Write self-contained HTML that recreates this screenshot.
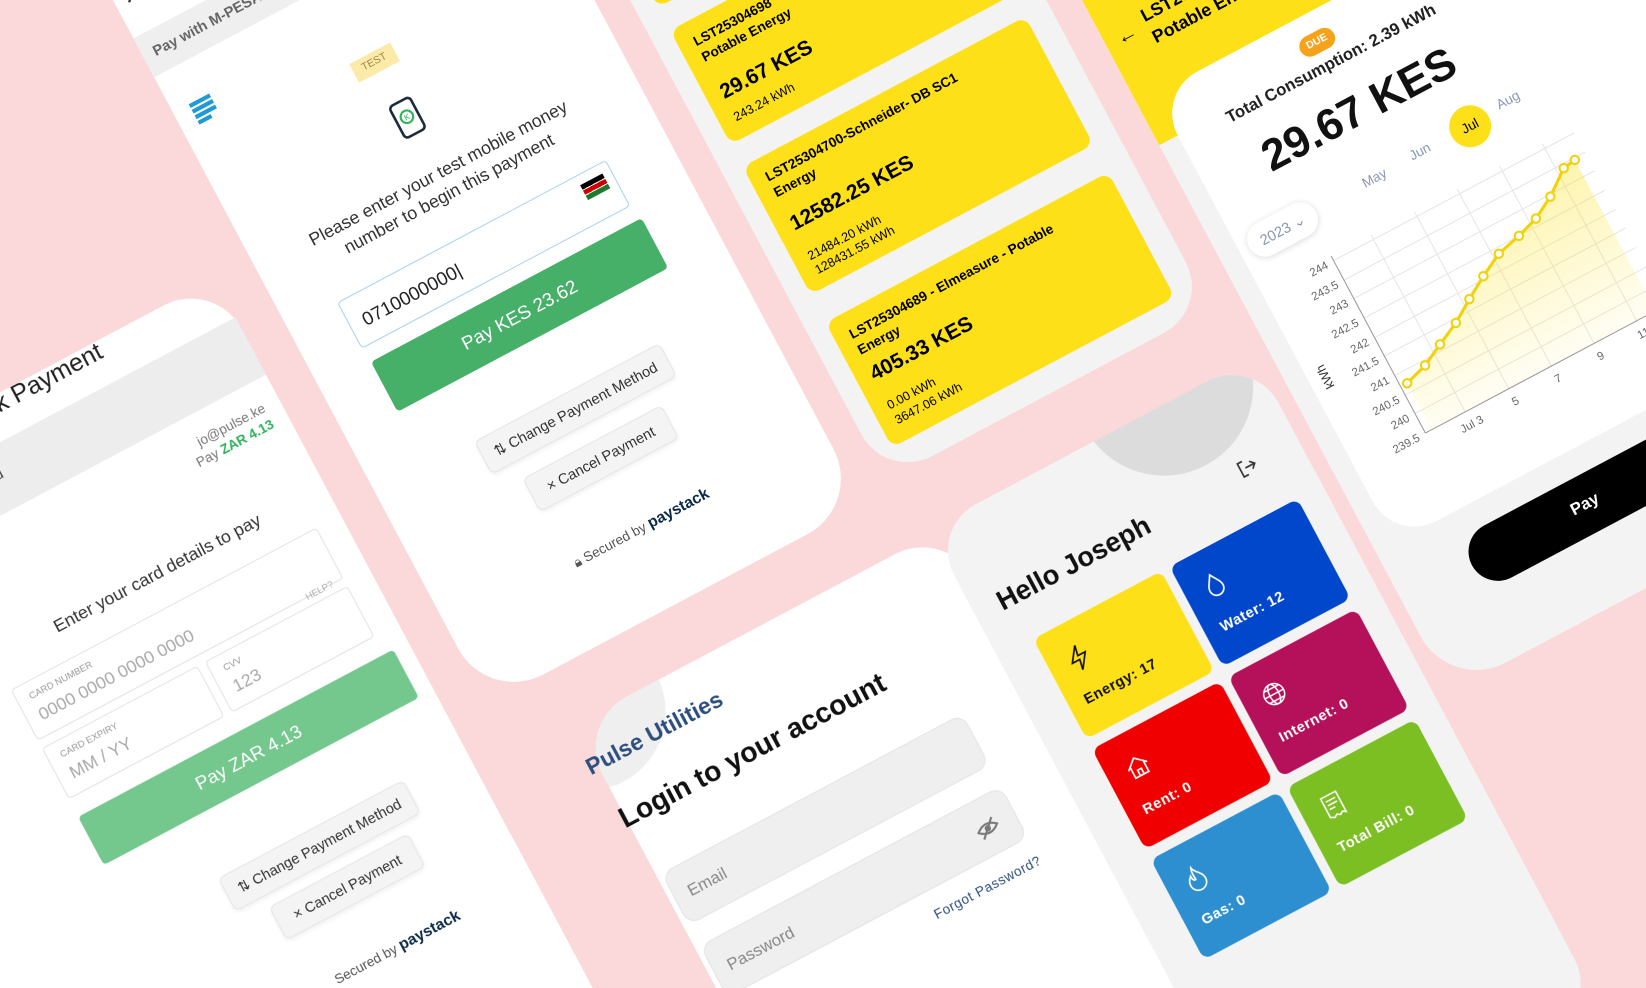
<!DOCTYPE html>
<html><head><meta charset="utf-8">
<style>
*{margin:0;padding:0;box-sizing:border-box}
html,body{width:1646px;height:988px;overflow:hidden}
body{background:#fbd9da;font-family:"Liberation Sans",sans-serif}
#clip{position:relative;width:1646px;height:988px;overflow:hidden;background:#fbd9da}
#wrap{position:absolute;left:0;top:0;width:1568px;height:941px;transform:scale(1.0497);transform-origin:0 0}
#plane{position:absolute;left:0;top:0;width:10px;height:10px;transform:matrix(0.883,-0.469,0.47,0.883,0,0);transform-origin:0 0}
.a{position:absolute;white-space:nowrap}
.ph{position:absolute;overflow:hidden}
.pill{position:absolute;background:#f4f4f4;border:1px solid #e6e6e6;border-radius:6px;font-size:14px;color:#333;display:flex;align-items:center;justify-content:center;box-shadow:0 2px 4px rgba(0,0,0,.06)}
.card{position:absolute;left:550px;width:305px;background:#fde018;border-radius:10px}
.tile{position:absolute;width:138px;height:108px;border-radius:8px;color:#fff}
.tile .l{position:absolute;left:16px;top:66px;font-size:14px;font-weight:700;letter-spacing:.5px}
.tile svg{position:absolute;left:18px;top:22px}
.box{position:absolute;border:1px solid #e3e3e3;border-radius:4px;background:#fff}
.lbl{position:absolute;left:12px;top:8px;font-size:9px;color:#999}
.val{position:absolute;left:12px;top:24px;font-size:17px;color:#aaa}
</style></head><body>
<div id="clip">
<div id="wrap"><div id="plane">

<!-- Phone A -->
<div class="ph" style="left:-500px;top:330px;width:556px;height:1200px;border-radius:55px;background:#fff"></div>
<div class="a" style="left:-300px;width:228px;text-align:right;top:326px;font-size:24px;color:#222">Paystack Payment</div>
<div class="a" style="left:-500px;top:372px;width:556px;height:62px;background:#ededed"></div>
<div class="a" style="left:-240px;top:390px;font-size:14px;color:#444">Card</div>
<div class="a" style="left:-120px;width:160px;text-align:right;top:453px;font-size:13px;color:#777">jo@pulse.ke</div>
<div class="a" style="left:-120px;width:160px;text-align:right;top:470px;font-size:13px;color:#777">Pay <b style="color:#2eb35a">ZAR 4.13</b></div>
<div class="a" style="left:-235px;top:543px;font-size:17px;color:#333">Enter your card details to pay</div>
<div class="box" style="left:-300px;top:585px;width:330px;height:55px"><div class="lbl">CARD NUMBER</div><div class="val">0000 0000 0000 0000</div></div>
<div class="box" style="left:-300px;top:648px;width:168px;height:55px"><div class="lbl">CARD EXPIRY</div><div class="val">MM / YY</div></div>
<div class="box" style="left:-124px;top:648px;width:154px;height:55px"><div class="lbl">CVV</div><div class="val">123</div></div>
<div class="a" style="left:-10px;top:634px;font-size:9px;color:#aaa">HELP?</div>
<div class="a" style="left:-300px;top:722px;width:340px;height:52px;background:#74c88e;border-radius:4px;color:#fff;font-size:18px;display:flex;align-items:center;justify-content:center">Pay ZAR 4.13</div>
<div class="pill" style="left:-210px;top:836px;width:200px;height:36px">⇅&nbsp;Change Payment Method</div>
<div class="pill" style="left:-180px;top:883px;width:150px;height:36px">×&nbsp;Cancel Payment</div>
<div class="a" style="left:-200px;width:220px;text-align:center;top:966px;font-size:13px;color:#555">Secured by <b style="color:#0b2a4a;font-size:15px">paystack</b></div>

<!-- Phone B -->
<div class="ph" style="left:95px;top:-200px;width:405px;height:1010px;border-radius:60px;background:#fff"></div>
<div class="a" style="left:104px;top:42px;font-size:22px;color:#333">✕</div>
<div class="a" style="left:95px;top:92px;width:405px;height:42px;background:#efefef"></div>
<div class="a" style="left:106px;top:104px;font-size:14px;color:#666;font-weight:700">Pay with M-PESA</div>
<div class="a" style="left:265px;top:210px;width:44px;height:20px;background:#fbeaa8;font-size:10px;color:#a08a40;text-align:center;line-height:20px">TEST</div>
<div class="a" style="left:112px;top:172px;width:22px">
 <div style="height:4px;background:#1e9bd7;margin-bottom:2px"></div><div style="height:4px;background:#1e9bd7;margin-bottom:2px"></div><div style="height:4px;background:#1e9bd7;margin-bottom:2px"></div><div style="height:4px;width:14px;background:#1e9bd7"></div></div>
<svg class="a" style="left:277px;top:262px" width="26" height="38" viewBox="0 0 26 38"><rect x="2" y="2" width="22" height="34" rx="4" fill="none" stroke="#1d2b3a" stroke-width="2.5"/><circle cx="13" cy="18" r="6" fill="none" stroke="#2eb35a" stroke-width="2"/><text x="13" y="21" font-size="8" text-anchor="middle" fill="#2eb35a" font-family="Liberation Sans">K</text></svg>
<div class="a" style="left:131px;width:320px;text-align:center;top:332px;font-size:17px;color:#333">Please enter your test mobile money</div>
<div class="a" style="left:131px;width:320px;text-align:center;top:354px;font-size:17px;color:#333">number to begin this payment</div>
<div class="a" style="left:148px;top:405px;width:290px;height:50px;border:1px solid #a9d4ef;border-radius:4px"></div>
<div class="a" style="left:162px;top:422px;font-size:18px;color:#222">0710000000|</div>
<div class="a" style="left:405px;top:415px;width:24px;height:16px;background:linear-gradient(#000 0 30%,#fff 30% 36%,#c00 36% 64%,#fff 64% 70%,#1a7a2e 70%)"></div>
<div class="a" style="left:150px;top:470px;width:292px;height:54px;background:#46b069;border-radius:4px;color:#fff;font-size:18px;display:flex;align-items:center;justify-content:center">Pay KES 23.62</div>
<div class="pill" style="left:201px;top:583px;width:200px;height:36px">⇅&nbsp;Change Payment Method</div>
<div class="pill" style="left:225px;top:636px;width:150px;height:36px">×&nbsp;Cancel Payment</div>
<div class="a" style="left:193px;width:220px;text-align:center;top:722px;font-size:13px;color:#555">🔒︎ Secured by <b style="color:#0b2a4a;font-size:15px">paystack</b></div>

<!-- Phone C -->
<div class="ph" style="left:530px;top:-200px;width:350px;height:1000px;border-radius:50px;background:#f3f3f3"></div>
<div class="card" style="top:175px;height:125px"></div>
<div class="card" style="top:325px;height:123px"></div>
<div class="a" style="left:565px;top:338px;font-size:13px;font-weight:700">LST25304698</div>
<div class="a" style="left:565px;top:355px;font-size:13px;font-weight:700">Potable Energy</div>
<div class="a" style="left:565px;top:390px;font-size:20px;font-weight:700">29.67 KES</div>
<div class="a" style="left:565px;top:420px;font-size:12px">243.24 kWh</div>
<div class="card" style="top:472px;height:138px"></div>
<div class="a" style="left:565px;top:484px;font-size:13px;font-weight:700">LST25304700-Schneider- DB SC1</div>
<div class="a" style="left:565px;top:501px;font-size:13px;font-weight:700">Energy</div>
<div class="a" style="left:565px;top:532px;font-size:20px;font-weight:700">12582.25 KES</div>
<div class="a" style="left:565px;top:570px;font-size:12px">21484.20 kWh</div>
<div class="a" style="left:565px;top:585px;font-size:12px">128431.55 kWh</div>
<div class="card" style="top:640px;height:135px"></div>
<div class="a" style="left:565px;top:654px;font-size:13px;font-weight:700">LST25304689 - Elmeasure - Potable</div>
<div class="a" style="left:565px;top:671px;font-size:13px;font-weight:700">Energy</div>
<div class="a" style="left:565px;top:694px;font-size:20px;font-weight:700">405.33 KES</div>
<div class="a" style="left:565px;top:731px;font-size:12px">0.00 kWh</div>
<div class="a" style="left:565px;top:747px;font-size:12px">3647.06 kWh</div>

<!-- Phone D -->
<div class="ph" style="left:910px;top:-100px;width:520px;height:1330px;border-radius:60px;background:#f3f3f3">
 <div style="position:absolute;left:0;top:0;width:520px;height:740px;background:#fde018"></div>
</div>
<div class="a" style="left:922px;top:522px;font-size:20px">←</div>
<div class="a" style="left:953px;top:515px;font-size:17px;font-weight:700">LST25304698 -</div>
<div class="a" style="left:953px;top:538px;font-size:17px;font-weight:700">Potable Energy</div>
<div class="a" style="left:930px;top:595px;width:490px;height:485px;border-radius:45px;background:#fff"></div>
<div class="a" style="left:1071px;top:614px;width:36px;height:20px;background:#f7a21b;border-radius:10px;color:#fff;font-size:10px;font-weight:700;text-align:center;line-height:20px">DUE</div>
<div class="a" style="left:961px;width:260px;text-align:center;top:640px;font-size:16px;font-weight:700;color:#222">Total Consumption: 2.39 kWh</div>
<div class="a" style="left:964px;width:260px;text-align:center;top:675px;font-size:42px;font-weight:700;color:#111">29.67 KES</div>
<div class="a" style="left:1064px;top:756px;font-size:13px;color:#8a96b5">May</div>
<div class="a" style="left:1116px;top:754px;font-size:13px;color:#8a96b5">Jun</div>
<div class="a" style="left:1160px;top:743px;width:40px;height:40px;border-radius:20px;background:#fde018;font-size:13px;text-align:center;line-height:40px">Jul</div>
<div class="a" style="left:1212px;top:750px;font-size:13px;color:#8a96b5">Aug</div>
<div class="a" style="left:940px;top:749px;width:72px;height:34px;border-radius:17px;background:#fff;box-shadow:0 1px 6px rgba(0,0,0,.15);font-size:14px;color:#8a96b5;text-align:center;line-height:34px">2023 ⌄</div>
<svg class="a" style="left:920px;top:790px;overflow:visible" width="360" height="260" viewBox="920 790 360 260" font-family="Liberation Sans" font-size="11" fill="#666">
 <defs><linearGradient id="g" x1="0" y1="0" x2="0" y2="1"><stop offset="0" stop-color="#fde018" stop-opacity=".35"/><stop offset="1" stop-color="#fde018" stop-opacity=".05"/></linearGradient></defs>
 <g stroke="#e6e6e6" stroke-width="1">
  <line x1="1005" y1="815" x2="1265" y2="815"/><line x1="1005" y1="836" x2="1265" y2="836"/><line x1="1005" y1="856" x2="1265" y2="856"/><line x1="1005" y1="877" x2="1265" y2="877"/><line x1="1005" y1="898" x2="1265" y2="898"/><line x1="1005" y1="918" x2="1265" y2="918"/><line x1="1005" y1="939" x2="1265" y2="939"/><line x1="1005" y1="960" x2="1265" y2="960"/><line x1="1005" y1="980" x2="1265" y2="980"/>
  <line x1="1048" y1="810" x2="1048" y2="1001"/><line x1="1095" y1="810" x2="1095" y2="1001"/><line x1="1141" y1="810" x2="1141" y2="1001"/><line x1="1187" y1="810" x2="1187" y2="1001"/><line x1="1233" y1="810" x2="1233" y2="1001"/>
 </g>
 <line x1="1005" y1="810" x2="1005" y2="1001" stroke="#999"/><line x1="1005" y1="1001" x2="1265" y2="1001" stroke="#999"/>
 <path d="M1012 951 L1035 944 L1057 933 L1080 922 L1102 908 L1124 895 L1147 883 L1172 877 L1194 870 L1216 858 L1240 840 L1253 838 L1253 1001 L1012 1001Z" fill="url(#g)"/>
 <polyline points="1012,951 1035,944 1057,933 1080,922 1102,908 1124,895 1147,883 1172,877 1194,870 1216,858 1240,840 1253,838" fill="none" stroke="#f2d20c" stroke-width="3"/>
 <g fill="#fff" stroke="#f2d20c" stroke-width="2"><circle cx="1012" cy="951" r="4"/><circle cx="1035" cy="944" r="4"/><circle cx="1057" cy="933" r="4"/><circle cx="1080" cy="922" r="4"/><circle cx="1102" cy="908" r="4"/><circle cx="1124" cy="895" r="4"/><circle cx="1147" cy="883" r="4"/><circle cx="1172" cy="877" r="4"/><circle cx="1194" cy="870" r="4"/><circle cx="1216" cy="858" r="4"/><circle cx="1240" cy="840" r="4"/><circle cx="1253" cy="838" r="4"/></g>
 <g text-anchor="end"><text x="998" y="819">244</text><text x="998" y="840">243.5</text><text x="998" y="860">243</text><text x="998" y="881">242.5</text><text x="998" y="902">242</text><text x="998" y="922">241.5</text><text x="998" y="943">241</text><text x="998" y="964">240.5</text><text x="998" y="984">240</text><text x="998" y="1005">239.5</text></g>
 <g text-anchor="middle"><text x="1048" y="1018">Jul 3</text><text x="1095" y="1018">5</text><text x="1141" y="1018">7</text><text x="1187" y="1018">9</text><text x="1233" y="1018">11</text></g>
 <text x="950" y="909" transform="rotate(-90 950 909)" text-anchor="middle" font-size="12" fill="#333">kWh</text>
</svg>
<div class="a" style="left:985px;top:1105px;width:420px;height:56px;border-radius:28px;background:#000;color:#fff;font-size:16px;font-weight:700;line-height:56px;padding-left:108px">Pay</div>

<!-- Phone F (login) -->
<div class="ph" style="left:160px;top:866px;width:400px;height:700px;border-radius:55px;background:#fff">
 <div style="position:absolute;left:-60px;top:-80px;width:150px;height:150px;border-radius:50%;background:#efefef"></div>
</div>
<div class="a" style="left:150px;top:896px;font-size:22px;font-weight:700;color:#2d4e7e">Pulse Utilities</div>
<div class="a" style="left:155px;top:952px;font-size:27px;font-weight:700;color:#111">Login to your account</div>
<div class="a" style="left:165px;top:1030px;width:325px;height:56px;background:#efefef;border-radius:12px;border:1px solid #e4e4e4"></div>
<div class="a" style="left:180px;top:1050px;font-size:16px;color:#888">Email</div>
<div class="a" style="left:165px;top:1108px;width:325px;height:56px;background:#efefef;border-radius:12px;border:1px solid #e4e4e4"></div>
<div class="a" style="left:180px;top:1130px;font-size:16px;color:#888">Password</div>
<svg class="a" style="left:448px;top:1128px" width="24" height="20" viewBox="0 0 24 20"><path d="M2 10 Q12 1 22 10 Q12 19 2 10Z" fill="none" stroke="#777" stroke-width="2"/><circle cx="12" cy="10" r="3" fill="#777"/><line x1="4" y1="18" x2="20" y2="2" stroke="#777" stroke-width="2"/></svg>
<div class="a" style="left:345px;width:145px;text-align:right;top:1180px;font-size:13px;color:#2d4e7e;letter-spacing:.5px">Forgot Password?</div>

<!-- Phone E -->
<div class="ph" style="left:545px;top:860px;width:350px;height:700px;border-radius:50px;background:#f3f3f3">
 <div style="position:absolute;left:176px;top:-100px;width:170px;height:170px;border-radius:50%;background:#dcdcdc"></div>
</div>
<svg class="a" style="left:830px;top:940px" width="20" height="20" viewBox="0 0 20 20" fill="none" stroke="#333" stroke-width="1.6"><path d="M8 3H3v14h5M8 10h10M14 6l4 4-4 4"/></svg>
<div class="a" style="left:570px;top:938px;font-size:26px;font-weight:700;color:#111">Hello Joseph</div>
<div class="tile" style="left:583px;top:999px;background:#fde018;color:#111"><svg width="24" height="28" viewBox="0 0 24 28" fill="none" stroke="#111" stroke-width="1.6"><path d="M14 2L4 16h8l-2 10 10-14h-8z"/></svg><div class="l">Energy: 17</div></div>
<div class="tile" style="left:730px;top:999px;background:#0047cc"><svg width="24" height="28" viewBox="0 0 24 28" fill="none" stroke="#fff" stroke-width="1.6"><path d="M12 3C8 10 5 13 5 17a7 7 0 0014 0c0-4-3-7-7-14z"/></svg><div class="l">Water: 12</div></div>
<div class="tile" style="left:583px;top:1118px;background:#f00000"><svg width="26" height="26" viewBox="0 0 26 26" fill="none" stroke="#fff" stroke-width="1.6"><path d="M3 13L13 4l10 9M6 11v11h14V11M11 22v-6h4v6"/></svg><div class="l">Rent: 0</div></div>
<div class="tile" style="left:730px;top:1118px;background:#b5105a"><svg width="26" height="26" viewBox="0 0 26 26" fill="none" stroke="#fff" stroke-width="1.4"><circle cx="13" cy="13" r="10"/><ellipse cx="13" cy="13" rx="4.5" ry="10"/><path d="M3 13h20M5 7h16M5 19h16"/></svg><div class="l">Internet: 0</div></div>
<div class="tile" style="left:583px;top:1237px;background:#2d8fd0"><svg width="24" height="28" viewBox="0 0 24 28" fill="none" stroke="#fff" stroke-width="1.6"><path d="M12 3c1 6 8 8 8 15a8 8 0 01-16 0c0-4 2-6 4-8 0 3 1 5 3 5 0-5-1-8 1-12z"/></svg><div class="l">Gas: 0</div></div>
<div class="tile" style="left:730px;top:1237px;background:#7bbf23"><svg width="26" height="28" viewBox="0 0 26 28" fill="none" stroke="#fff" stroke-width="1.5"><path d="M5 3h16v22l-3-2-3 2-3-2-3 2-4-2z"/><path d="M8 8h10M8 12h10M8 16h6"/></svg><div class="l">Total Bill: 0</div></div>

</div></div>
</div>
</body></html>
